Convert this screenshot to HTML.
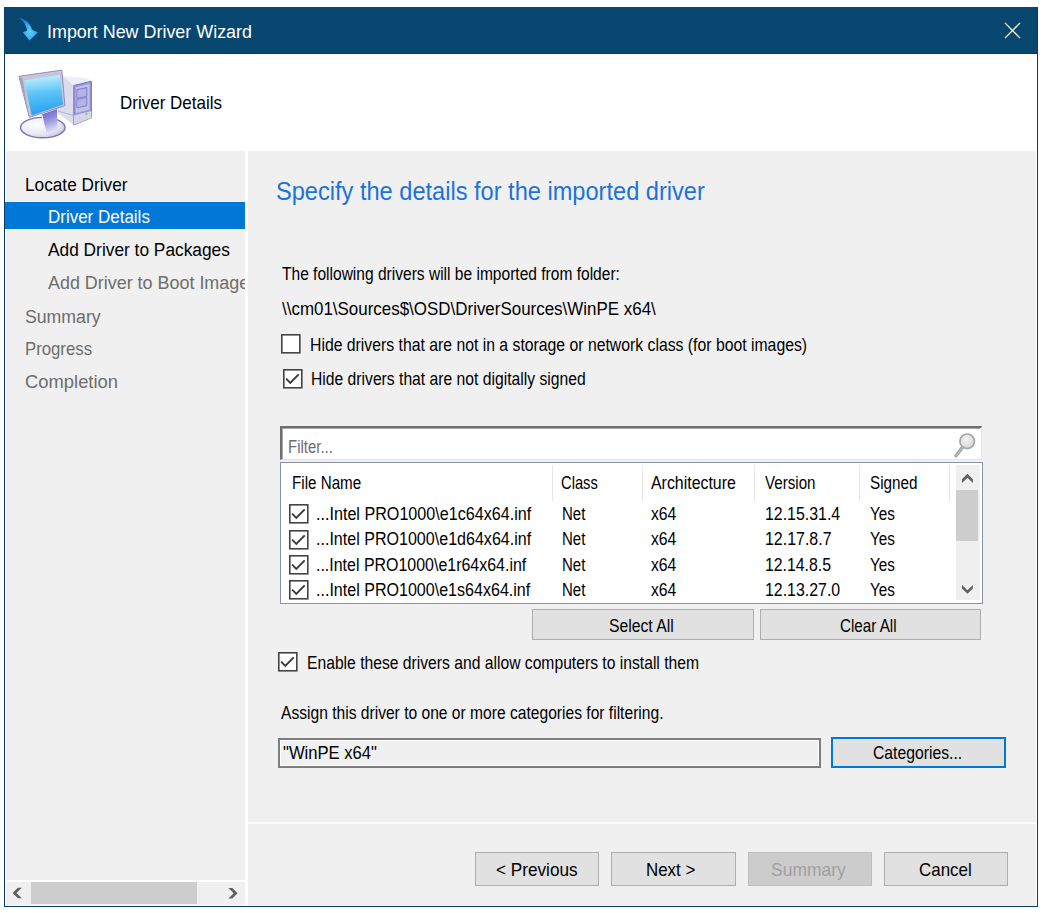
<!DOCTYPE html>
<html><head><meta charset="utf-8"><style>
html,body{margin:0;padding:0;background:#fff;width:1048px;height:913px;overflow:hidden;}
.t{position:absolute;white-space:pre;line-height:1;font-family:"Liberation Sans",sans-serif;}
.r{position:absolute;}
svg.r{overflow:visible;}
</style></head><body>
<div class="r" style="left:4px;top:7px;width:1034px;height:900px;background:#fff;border:1px solid #0b3b63;box-sizing:border-box;"></div>
<div class="r" style="left:4px;top:7px;width:1034px;height:47px;background:#07466f;"></div>
<div class="r" style="left:4px;top:53px;width:1034px;height:1px;background:#043a62;"></div>
<div class="r" style="left:4px;top:7px;width:1px;height:900px;background:#0b3b63;"></div>
<div class="r" style="left:1037px;top:7px;width:1px;height:900px;background:#0b3b63;"></div>
<div class="r" style="left:4px;top:906px;width:1034px;height:1px;background:#0b3b63;"></div>
<svg class="r" style="left:12px;top:14px" width="32" height="32" viewBox="12 14 32 32">
<defs><radialGradient id="ag" cx="0.55" cy="0.62" r="0.6"><stop offset="0" stop-color="#5cd0ff"/><stop offset="0.6" stop-color="#36a8ee"/><stop offset="1" stop-color="#1f78c8"/></radialGradient></defs>
<path d="M20,17.9 Q28.8,19.8 32.2,30 L37.9,32.3 L29.5,40.6 L22.9,32.3 L27.2,30.4 Q25.6,22.6 20,18.7 Z" fill="url(#ag)"/>
</svg>
<div class="t" style="left:47.00px;top:24.00px;font-size:17.60px;color:#fff;transform:scaleX(1.0179);transform-origin:0 0;-webkit-text-stroke:0;">Import New Driver Wizard</div>
<svg class="r" style="left:1000px;top:18px" width="26" height="26" viewBox="0 0 26 26">
<path d="M4.9,4.9 L20.1,20.1 M20.1,4.9 L4.9,20.1" stroke="#fff" stroke-width="1.3" fill="none"/></svg>
<svg class="r" style="left:10px;top:60px" width="90" height="85" viewBox="10 60 90 85">
<defs>
<linearGradient id="scr" x1="0.45" y1="0" x2="0.55" y2="1"><stop offset="0" stop-color="#c4f2fc"/><stop offset="0.45" stop-color="#5cc4f6"/><stop offset="1" stop-color="#249cf0"/></linearGradient>
<linearGradient id="nk" x1="0" y1="0" x2="0.3" y2="1"><stop offset="0" stop-color="#5e56c4"/><stop offset="0.55" stop-color="#9490dc"/><stop offset="1" stop-color="#d8d8f4"/></linearGradient>
<radialGradient id="bs" cx="0.35" cy="0.35" r="0.75"><stop offset="0" stop-color="#ffffff"/><stop offset="0.7" stop-color="#e4e4ee"/><stop offset="1" stop-color="#c0bcdc"/></radialGradient>
</defs>
<ellipse cx="42.8" cy="127.6" rx="22.3" ry="10.2" fill="url(#bs)" stroke="#7a72bc" stroke-width="1.4"/>
<path d="M41.5,114.5 L57,109 L57.5,128.5 Q52,133 45.5,132.5 Q43.5,124 41.5,114.5 Z" fill="url(#nk)"/>
<path d="M41.8,115 Q43.8,124 45.8,132" stroke="#f4f4fc" stroke-width="1.2" fill="none"/>
<path d="M62.6,75.7 L73.8,85.5 L73.8,125 L57.7,113 L57.7,104 L63,103 Z" fill="#dcdcec"/>
<path d="M62.6,75.7 L87.9,78.5 L91.4,81.3 L73.8,85.5 Z" fill="#eeeef8"/>
<path d="M73.8,85.5 L91.4,81.3 L91.4,117.7 L73.8,125 Z" fill="#9a96dc" stroke="#6e68bc" stroke-width="0.9"/>
<path d="M75.6,87.2 L89.6,83.8 L89.6,109.5 L75.6,113.2 Z" fill="#c0c0ec"/>
<path d="M76.8,89.6 L86.8,87.6 L86.8,96.4 L76.8,98.4 Z" fill="#b4b2e6" stroke="#7e78c4" stroke-width="0.9"/>
<path d="M76.8,99.4 L86.8,97.4 L86.8,105.8 L76.8,107.8 Z" fill="#b4b2e6" stroke="#7e78c4" stroke-width="0.9"/>
<path d="M73.8,115.5 L91.4,111 L91.4,117.7 L73.8,125 Z" fill="#d4d4e6"/>
<path d="M57.7,111 L73.8,115.5" stroke="#a8a6d0" stroke-width="0.8"/>
<circle cx="86.5" cy="114" r="1.2" fill="#6fe070"/>
<path d="M18.9,76.3 L61.9,70.1 L64.9,105.7 L29.3,117.4 Z" fill="#c6c6d8" stroke="#8a84c4" stroke-width="0.9"/>
<path d="M18.9,76.3 L22.5,78.5 L29.3,117.4 Z" fill="#a4a4bc"/>
<path d="M24.1,80.6 L59.7,74.7 L63.1,104.5 L31.8,115.5 Z" fill="url(#scr)"/>
</svg>
<div class="t" style="left:119.70px;top:94.00px;font-size:18.72px;color:#000;transform:scaleX(0.9083);transform-origin:0 0;">Driver Details</div>
<div class="r" style="left:6px;top:151px;width:239px;height:729px;background:#f0f0f0;"></div>
<div class="r" style="left:248px;top:151px;width:788px;height:755px;background:#f0f0f0;"></div>
<div class="r" style="left:5px;top:202px;width:240px;height:27px;background:#0078d7;"></div>
<div class="t" style="left:24.90px;top:176.00px;font-size:18.85px;color:#000;transform:scaleX(0.9144);transform-origin:0 0;">Locate Driver</div>
<div class="t" style="left:48.40px;top:208.00px;font-size:18.85px;color:#fff;transform:scaleX(0.9010);transform-origin:0 0;">Driver Details</div>
<div class="t" style="left:47.70px;top:241.00px;font-size:18.85px;color:#000;transform:scaleX(0.9187);transform-origin:0 0;">Add Driver to Packages</div>
<div class="r" style="left:6px;top:260px;width:239px;height:40px;overflow:hidden">
<div class="t" style="left:41.70px;top:14.00px;font-size:18.85px;color:#6d6d6d;transform:scaleX(0.9509);transform-origin:0 0;">Add Driver to Boot Image</div>
</div>
<div class="t" style="left:24.90px;top:308.00px;font-size:18.85px;color:#6d6d6d;transform:scaleX(0.9380);transform-origin:0 0;">Summary</div>
<div class="t" style="left:24.90px;top:340.00px;font-size:18.85px;color:#6d6d6d;transform:scaleX(0.8886);transform-origin:0 0;">Progress</div>
<div class="t" style="left:24.90px;top:373.00px;font-size:18.85px;color:#6d6d6d;transform:scaleX(0.9759);transform-origin:0 0;">Completion</div>
<div class="r" style="left:6px;top:882px;width:239px;height:23px;background:#f0f0f0;"></div>
<div class="r" style="left:31px;top:882px;width:166px;height:22px;background:#cdcdcd;"></div>
<svg class="r" style="left:6px;top:882px" width="239" height="23" viewBox="6 882 239 23">
<path d="M12.6,893 L17.9,887.7 L21.8,887.7 L16.5,893 L21.8,898.3 L17.9,898.3 Z" fill="#606060"/>
<path d="M237.6,893.2 L232.3,887.9 L228.4,887.9 L233.7,893.2 L228.4,898.6 L232.3,898.6 Z" fill="#606060"/>
</svg>
<div class="t" style="left:276.00px;top:179.00px;font-size:25.42px;color:#1c72dc;transform:scaleX(0.9286);transform-origin:0 0;">Specify the details for the imported driver</div>
<div class="t" style="left:282.40px;top:265.00px;font-size:18.02px;color:#000;transform:scaleX(0.8631);transform-origin:0 0;">The following drivers will be imported from folder:</div>
<div class="t" style="left:282.40px;top:300.00px;font-size:18.02px;color:#000;transform:scaleX(0.9404);transform-origin:0 0;">\\cm01\Sources$\OSD\DriverSources\WinPE x64\</div>
<svg class="r" style="left:279.0px;top:332.4px" width="23.6" height="23.6" viewBox="279.0 332.4 23.6 23.6"><rect x="281.8" y="335.2" width="18.0" height="18.0" fill="#fff" stroke="#444" stroke-width="1.6"/></svg>
<div class="t" style="left:310.00px;top:336.00px;font-size:18.02px;color:#000;transform:scaleX(0.8755);transform-origin:0 0;">Hide drivers that are not in a storage or network class (for boot images)</div>
<svg class="r" style="left:280.7px;top:367px" width="23.6" height="23.6" viewBox="280.7 367 23.6 23.6"><rect x="283.5" y="369.8" width="18.0" height="18.0" fill="#fff" stroke="#444" stroke-width="1.6"/><path d="M285.8,378.7 L290.0,382.9 L298.4,374.3" stroke="#3a3a3a" stroke-width="1.9" fill="none"/></svg>
<div class="t" style="left:311.00px;top:370.00px;font-size:18.02px;color:#000;transform:scaleX(0.8706);transform-origin:0 0;">Hide drivers that are not digitally signed</div>
<div class="r" style="left:280px;top:426px;width:702px;height:34px;background:#fff;border-top:2px solid #6e6e6e;border-left:2px solid #6e6e6e;border-right:1px solid #e3e3e3;border-bottom:1px solid #e3e3e3;box-sizing:border-box;"></div>
<div class="r" style="left:282px;top:428px;width:698px;height:1px;background:#a8a8a8;"></div>
<div class="r" style="left:282px;top:428px;width:1px;height:31px;background:#a8a8a8;"></div>
<div class="t" style="left:287.60px;top:438.00px;font-size:18.02px;color:#6d6d6d;transform:scaleX(0.8299);transform-origin:0 0;">Filter...</div>
<svg class="r" style="left:950px;top:430px" width="30" height="30" viewBox="950 430 30 30">
<defs><radialGradient id="mg" cx="0.4" cy="0.35" r="0.7"><stop offset="0" stop-color="#f4f4f4"/><stop offset="1" stop-color="#d4d4d4"/></radialGradient></defs>
<path d="M956,455.8 L962.3,447.5" stroke="#9c9c9c" stroke-width="3.4" stroke-linecap="round"/>
<path d="M956,455.8 L962.3,447.5" stroke="#c4c4c4" stroke-width="1.2" stroke-linecap="round"/>
<circle cx="967.2" cy="441.3" r="7.3" fill="url(#mg)" stroke="#a6a6a6" stroke-width="1.7"/>
</svg>
<div class="r" style="left:280px;top:462px;width:703px;height:142px;background:#fff;border:1px solid #8b929d;box-sizing:border-box;"></div>
<div class="r" style="left:552px;top:465px;width:1px;height:36px;background:#e5e5e5;"></div>
<div class="r" style="left:642px;top:465px;width:1px;height:36px;background:#e5e5e5;"></div>
<div class="r" style="left:754px;top:465px;width:1px;height:36px;background:#e5e5e5;"></div>
<div class="r" style="left:859px;top:465px;width:1px;height:36px;background:#e5e5e5;"></div>
<div class="r" style="left:949px;top:465px;width:1px;height:36px;background:#e5e5e5;"></div>
<div class="t" style="left:291.90px;top:474.00px;font-size:18.02px;color:#000;transform:scaleX(0.8429);transform-origin:0 0;">File Name</div>
<div class="t" style="left:561.10px;top:474.00px;font-size:18.02px;color:#000;transform:scaleX(0.8178);transform-origin:0 0;">Class</div>
<div class="t" style="left:651.20px;top:474.00px;font-size:18.02px;color:#000;transform:scaleX(0.8824);transform-origin:0 0;">Architecture</div>
<div class="t" style="left:764.80px;top:474.00px;font-size:18.02px;color:#000;transform:scaleX(0.8403);transform-origin:0 0;">Version</div>
<div class="t" style="left:869.60px;top:474.00px;font-size:18.02px;color:#000;transform:scaleX(0.8485);transform-origin:0 0;">Signed</div>
<svg class="r" style="left:286.6px;top:502.30000000000007px" width="23.6" height="23.6" viewBox="286.6 502.30000000000007 23.6 23.6"><rect x="289.40000000000003" y="505.1000000000001" width="18.0" height="18.0" fill="#fff" stroke="#444" stroke-width="1.6"/><path d="M291.70000000000005,514.0000000000001 L295.90000000000003,518.2 L304.3,509.6000000000001" stroke="#3a3a3a" stroke-width="1.9" fill="none"/></svg>
<div class="t" style="left:316.00px;top:505.00px;font-size:18.02px;color:#000;transform:scaleX(0.8956);transform-origin:0 0;">...Intel PRO1000\e1c64x64.inf</div>
<div class="t" style="left:562.40px;top:505.00px;font-size:18.02px;color:#000;transform:scaleX(0.8321);transform-origin:0 0;">Net</div>
<div class="t" style="left:650.90px;top:505.00px;font-size:18.02px;color:#000;transform:scaleX(0.8724);transform-origin:0 0;">x64</div>
<div class="t" style="left:764.80px;top:505.00px;font-size:18.02px;color:#000;transform:scaleX(0.8825);transform-origin:0 0;">12.15.31.4</div>
<div class="t" style="left:869.90px;top:505.00px;font-size:18.02px;color:#000;transform:scaleX(0.8469);transform-origin:0 0;">Yes</div>
<svg class="r" style="left:286.6px;top:527.5px" width="23.6" height="23.6" viewBox="286.6 527.5 23.6 23.6"><rect x="289.40000000000003" y="530.3" width="18.0" height="18.0" fill="#fff" stroke="#444" stroke-width="1.6"/><path d="M291.70000000000005,539.2 L295.90000000000003,543.4 L304.3,534.8" stroke="#3a3a3a" stroke-width="1.9" fill="none"/></svg>
<div class="t" style="left:316.00px;top:530.00px;font-size:18.02px;color:#000;transform:scaleX(0.8915);transform-origin:0 0;">...Intel PRO1000\e1d64x64.inf</div>
<div class="t" style="left:562.40px;top:530.00px;font-size:18.02px;color:#000;transform:scaleX(0.8321);transform-origin:0 0;">Net</div>
<div class="t" style="left:650.90px;top:530.00px;font-size:18.02px;color:#000;transform:scaleX(0.8724);transform-origin:0 0;">x64</div>
<div class="t" style="left:764.80px;top:530.00px;font-size:18.02px;color:#000;transform:scaleX(0.8855);transform-origin:0 0;">12.17.8.7</div>
<div class="t" style="left:869.90px;top:530.00px;font-size:18.02px;color:#000;transform:scaleX(0.8469);transform-origin:0 0;">Yes</div>
<svg class="r" style="left:286.6px;top:552.8000000000001px" width="23.6" height="23.6" viewBox="286.6 552.8000000000001 23.6 23.6"><rect x="289.40000000000003" y="555.6" width="18.0" height="18.0" fill="#fff" stroke="#444" stroke-width="1.6"/><path d="M291.70000000000005,564.5000000000001 L295.90000000000003,568.7 L304.3,560.1" stroke="#3a3a3a" stroke-width="1.9" fill="none"/></svg>
<div class="t" style="left:316.00px;top:556.00px;font-size:18.02px;color:#000;transform:scaleX(0.8858);transform-origin:0 0;">...Intel PRO1000\e1r64x64.inf</div>
<div class="t" style="left:562.40px;top:556.00px;font-size:18.02px;color:#000;transform:scaleX(0.8321);transform-origin:0 0;">Net</div>
<div class="t" style="left:650.90px;top:556.00px;font-size:18.02px;color:#000;transform:scaleX(0.8724);transform-origin:0 0;">x64</div>
<div class="t" style="left:764.80px;top:556.00px;font-size:18.02px;color:#000;transform:scaleX(0.8788);transform-origin:0 0;">12.14.8.5</div>
<div class="t" style="left:869.90px;top:556.00px;font-size:18.02px;color:#000;transform:scaleX(0.8469);transform-origin:0 0;">Yes</div>
<svg class="r" style="left:286.6px;top:578.1px" width="23.6" height="23.6" viewBox="286.6 578.1 23.6 23.6"><rect x="289.40000000000003" y="580.9" width="18.0" height="18.0" fill="#fff" stroke="#444" stroke-width="1.6"/><path d="M291.70000000000005,589.8000000000001 L295.90000000000003,594.0 L304.3,585.4" stroke="#3a3a3a" stroke-width="1.9" fill="none"/></svg>
<div class="t" style="left:316.00px;top:581.00px;font-size:18.02px;color:#000;transform:scaleX(0.8914);transform-origin:0 0;">...Intel PRO1000\e1s64x64.inf</div>
<div class="t" style="left:562.40px;top:581.00px;font-size:18.02px;color:#000;transform:scaleX(0.8321);transform-origin:0 0;">Net</div>
<div class="t" style="left:650.90px;top:581.00px;font-size:18.02px;color:#000;transform:scaleX(0.8724);transform-origin:0 0;">x64</div>
<div class="t" style="left:764.80px;top:581.00px;font-size:18.02px;color:#000;transform:scaleX(0.8825);transform-origin:0 0;">12.13.27.0</div>
<div class="t" style="left:869.90px;top:581.00px;font-size:18.02px;color:#000;transform:scaleX(0.8469);transform-origin:0 0;">Yes</div>
<div class="r" style="left:956px;top:465px;width:24px;height:135px;background:#f0f0f0;"></div>
<div class="r" style="left:956px;top:490px;width:22px;height:51px;background:#cdcdcd;"></div>
<svg class="r" style="left:956px;top:465px" width="24" height="136" viewBox="956 465 24 136">
<path d="M962,479.2 L967.45,473.7 L972.9,479.2 L972.9,483 L967.45,477.8 L962,483 Z" fill="#606060"/>
<path d="M962,585 L967.45,590.2 L972.9,585 L972.9,588.6 L967.45,593.8 L962,588.6 Z" fill="#606060"/>
</svg>
<div class="r" style="left:532px;top:609px;width:222px;height:31px;background:#e1e1e1;border:1px solid #adadad;box-sizing:border-box;"></div>
<div class="t" style="left:608.60px;top:617.00px;font-size:18.02px;color:#000;transform:scaleX(0.8731);transform-origin:0 0;">Select All</div>
<div class="r" style="left:760px;top:609px;width:221px;height:31px;background:#e1e1e1;border:1px solid #adadad;box-sizing:border-box;"></div>
<div class="t" style="left:840.00px;top:617.00px;font-size:18.02px;color:#000;transform:scaleX(0.8435);transform-origin:0 0;">Clear All</div>
<svg class="r" style="left:276.3px;top:650.4px" width="23.6" height="23.6" viewBox="276.3 650.4 23.6 23.6"><rect x="279.1" y="653.1999999999999" width="18.0" height="18.0" fill="#fff" stroke="#444" stroke-width="1.6"/><path d="M281.40000000000003,662.1 L285.6,666.3 L294.0,657.6999999999999" stroke="#3a3a3a" stroke-width="1.9" fill="none"/></svg>
<div class="t" style="left:307.20px;top:654.00px;font-size:18.02px;color:#000;transform:scaleX(0.8700);transform-origin:0 0;">Enable these drivers and allow computers to install them</div>
<div class="t" style="left:281.00px;top:704.00px;font-size:18.02px;color:#000;transform:scaleX(0.8662);transform-origin:0 0;">Assign this driver to one or more categories for filtering.</div>
<div class="r" style="left:278px;top:738px;width:543px;height:30px;background:#f0f0f0;border:2px solid #7d7d7d;box-shadow:inset 0 0 0 1px #fff;box-sizing:border-box;"></div>
<div class="t" style="left:282.60px;top:744.00px;font-size:18.02px;color:#000;transform:scaleX(0.9225);transform-origin:0 0;">"WinPE x64"</div>
<div class="r" style="left:831px;top:737px;width:175px;height:31px;background:#e1e1e1;border:2px solid #0078d7;box-sizing:border-box;"></div>
<div class="t" style="left:872.60px;top:744.00px;font-size:18.02px;color:#000;transform:scaleX(0.8727);transform-origin:0 0;">Categories...</div>
<div class="r" style="left:248px;top:822px;width:788px;height:2px;background:#fbfbfb;"></div>
<div class="r" style="left:475px;top:852px;width:124px;height:34px;background:#e1e1e1;border:1px solid #adadad;box-sizing:border-box;"></div>
<div class="t" style="left:495.80px;top:861.00px;font-size:18.72px;color:#000;transform:scaleX(0.9179);transform-origin:0 0;">&lt; Previous</div>
<div class="r" style="left:611px;top:852px;width:125px;height:34px;background:#e1e1e1;border:1px solid #adadad;box-sizing:border-box;"></div>
<div class="t" style="left:646.00px;top:861.00px;font-size:18.72px;color:#000;transform:scaleX(0.9029);transform-origin:0 0;">Next &gt;</div>
<div class="r" style="left:748px;top:852px;width:124px;height:34px;background:#cccccc;border:1px solid #bfbfbf;box-sizing:border-box;"></div>
<div class="t" style="left:770.90px;top:861.00px;font-size:18.72px;color:#a0a0a0;transform:scaleX(0.9351);transform-origin:0 0;">Summary</div>
<div class="r" style="left:884px;top:852px;width:124px;height:34px;background:#e1e1e1;border:1px solid #adadad;box-sizing:border-box;"></div>
<div class="t" style="left:919.30px;top:861.00px;font-size:18.72px;color:#000;transform:scaleX(0.9057);transform-origin:0 0;">Cancel</div>
</body></html>
